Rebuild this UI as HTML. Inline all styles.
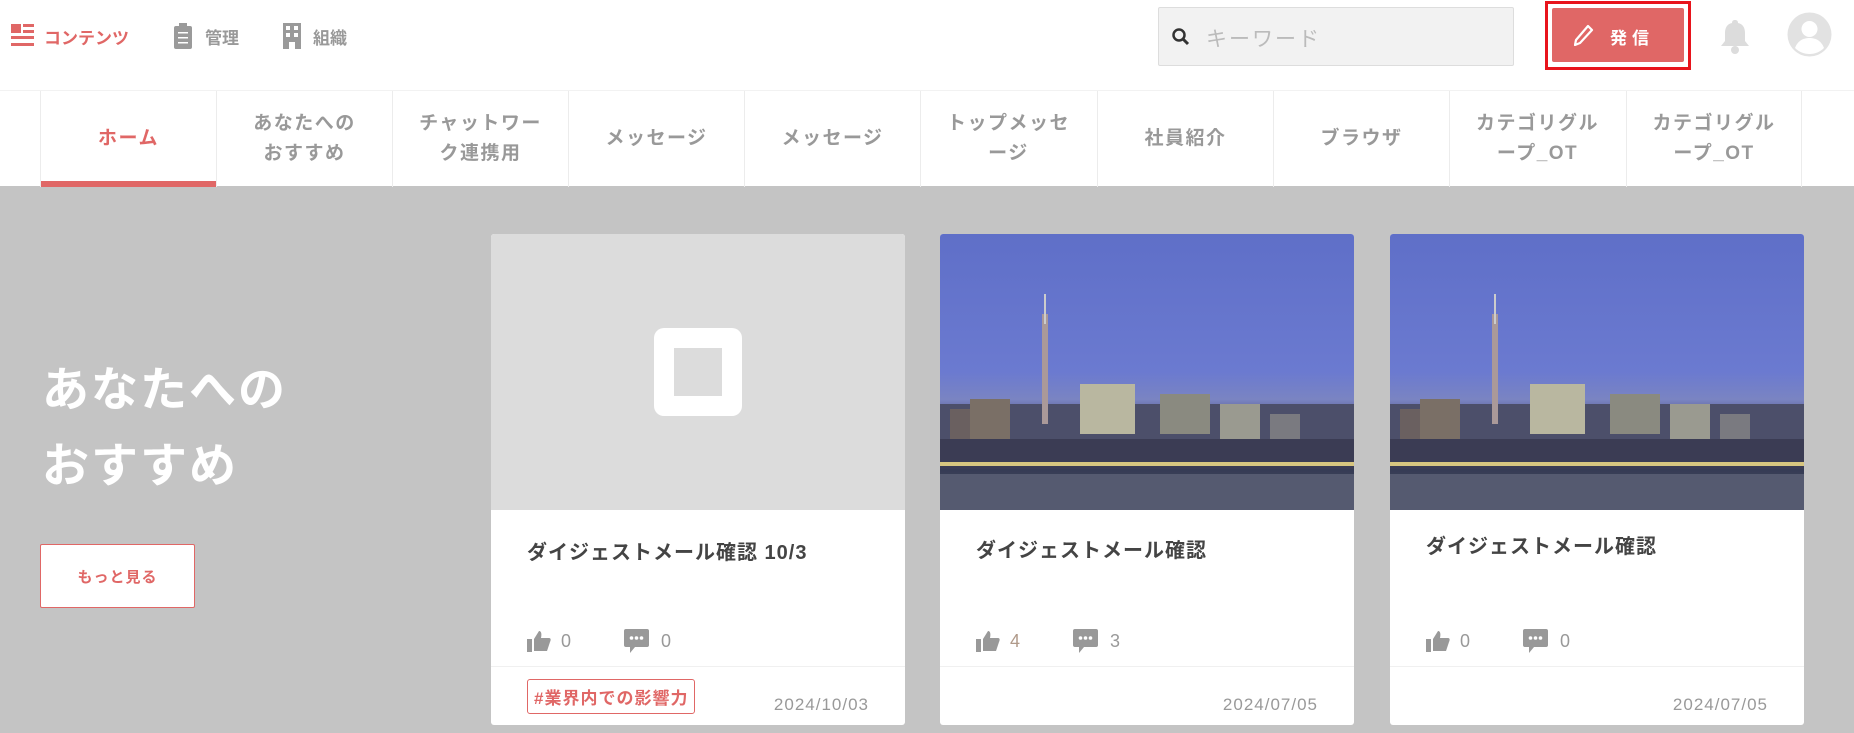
<!DOCTYPE html>
<html><head><meta charset="utf-8"><style>
*{margin:0;padding:0;box-sizing:border-box}
body{width:1854px;height:733px;overflow:hidden;background:#c4c4c4;font-family:"Liberation Sans","Noto Sans CJK JP",sans-serif;position:relative}
.hdr{position:absolute;left:0;top:0;width:1854px;height:90px;background:#fff}
.nav{position:absolute;left:0;top:90px;width:1854px;height:96px;background:#fff;border-top:1px solid #f2f2f2}
.tab{position:absolute;top:0;height:96px;width:176px;border-left:1px solid #ececec;display:flex;align-items:center;justify-content:center;text-align:center;font-size:19px;font-weight:bold;color:#999;line-height:30px;letter-spacing:1.5px}
.tab.on{color:#e06766}
.tab.on:after{content:"";position:absolute;left:0;right:0;bottom:0;height:6px;background:#e06766}
.card{position:absolute;top:234px;width:414px;height:491px;background:#fff;border-radius:3px;overflow:hidden}
.img{height:276px}
.ph{background:#dcdcdc;display:flex;align-items:center;justify-content:center}
.title{position:absolute;left:36px;top:302px;font-size:20px;font-weight:bold;color:#444;letter-spacing:1px}
.stats{position:absolute;left:36px;top:395px;font-size:18px;color:#999;display:flex;align-items:center}
.foot{position:absolute;left:0;right:0;top:432px;border-top:1px solid #f0f0f0}
.date{position:absolute;right:36px;top:461px;font-size:17px;color:#999;letter-spacing:1px}
.tag{position:absolute;left:36px;top:445px;border:1px solid #e06766;border-radius:3px;color:#e06766;font-size:17px;font-weight:bold;padding:4px 6px;letter-spacing:1px}
.city{background:linear-gradient(#5f6fc8 0%,#6b7ad0 50%,#7a84c2 60%,#4a507e 68%,#2a2d4a 78%,#3a4058 88%,#4b5067 100%);position:relative}
</style></head><body>
<div class="hdr">
 <svg style="position:absolute;left:11px;top:24px" width="23" height="23" viewBox="0 0 23 23"><rect x="0" y="0" width="10" height="9" fill="#e06766"/><rect x="12" y="0" width="11" height="3" fill="#e06766"/><rect x="12" y="6" width="11" height="3" fill="#e06766"/><rect x="0" y="12" width="23" height="3" fill="#e06766"/><rect x="0" y="19" width="23" height="3" fill="#e06766"/></svg>
 <div style="position:absolute;left:44px;top:24px;font-size:17px;font-weight:bold;color:#e06766">コンテンツ</div>
 <svg style="position:absolute;left:174px;top:23px" width="18" height="26" viewBox="0 0 18 26"><rect x="0" y="3" width="18" height="23" rx="2" fill="#9a9a9a"/><rect x="5" y="0" width="8" height="5" fill="#9a9a9a"/><rect x="4" y="9" width="10" height="1.5" fill="#fff"/><rect x="4" y="14" width="10" height="1.5" fill="#fff"/><rect x="4" y="19" width="10" height="1.5" fill="#fff"/></svg>
 <div style="position:absolute;left:205px;top:24px;font-size:17px;font-weight:bold;color:#999">管理</div>
 <svg style="position:absolute;left:283px;top:23px" width="18" height="26" viewBox="0 0 18 26"><rect x="0" y="0" width="18" height="26" fill="#9a9a9a"/><rect x="3" y="3" width="4" height="4" fill="#fff"/><rect x="11" y="3" width="4" height="4" fill="#fff"/><rect x="3" y="10" width="4" height="4" fill="#fff"/><rect x="11" y="10" width="4" height="4" fill="#fff"/><rect x="6" y="19" width="6" height="7" fill="#fff"/></svg>
 <div style="position:absolute;left:313px;top:24px;font-size:17px;font-weight:bold;color:#999">組織</div>
 <div style="position:absolute;left:1158px;top:7px;width:356px;height:59px;background:#f2f2f2;border:1px solid #ddd;border-radius:2px">
  <svg style="position:absolute;left:13px;top:20px" width="18" height="18" viewBox="0 0 18 18"><circle cx="7" cy="7" r="5.5" fill="none" stroke="#333" stroke-width="2.5"/><line x1="11" y1="11" x2="16" y2="16" stroke="#333" stroke-width="3"/></svg>
  <div style="position:absolute;left:47px;top:15px;font-size:21px;color:#bbb;letter-spacing:2px">キーワード</div>
 </div>
 <div style="position:absolute;left:1545px;top:1px;width:146px;height:69px;border:3px solid #e8141c"></div>
 <div style="position:absolute;left:1552px;top:8px;width:132px;height:54px;background:#e06766;border-radius:2px;color:#fff;font-weight:bold;font-size:17px;letter-spacing:5px">
  <svg style="position:absolute;left:22px;top:16px" width="20" height="22" viewBox="0 0 20 22"><path d="M14 2 L18 6 L6 19 L1 21 L2 16 Z" fill="none" stroke="#fff" stroke-width="2.2" stroke-linejoin="round"/></svg>
  <span style="position:absolute;left:58px;top:16px">発信</span>
 </div>
 <svg style="position:absolute;left:1719px;top:18px" width="32" height="36" viewBox="0 0 32 36"><path d="M16 2c2 0 3 1 3 3 5 1 7 5 7 10v8l4 5H2l4-5v-8c0-5 2-9 7-10 0-2 1-3 3-3z" fill="#dcdcdc"/><circle cx="16" cy="32" r="4" fill="#dcdcdc"/></svg>
 <svg style="position:absolute;left:1787px;top:12px" width="45" height="45" viewBox="0 0 45 45"><circle cx="22.5" cy="22.5" r="22" fill="#e2e2e2"/><circle cx="22.5" cy="17" r="8" fill="#fff"/><path d="M8 36c3-8 9-10 14.5-10s11.5 2 14.5 10c-4 4-9 6-14.5 6S12 40 8 36z" fill="#fff"/></svg>
</div>
<div class="nav">
 <div class="tab on" style="left:40px">ホーム</div>
 <div class="tab" style="left:216px">あなたへの<br>おすすめ</div>
 <div class="tab" style="left:392px">チャットワー<br>ク連携用</div>
 <div class="tab" style="left:568px">メッセージ</div>
 <div class="tab" style="left:744px">メッセージ</div>
 <div class="tab" style="left:920px">トップメッセ<br>ージ</div>
 <div class="tab" style="left:1097px">社員紹介</div>
 <div class="tab" style="left:1273px">ブラウザ</div>
 <div class="tab" style="left:1449px">カテゴリグル<br>ープ_OT</div>
 <div class="tab" style="left:1626px;border-right:1px solid #ececec">カテゴリグル<br>ープ_OT</div>
</div>
<div style="position:absolute;left:42px;top:352px;font-size:47px;font-weight:bold;color:#fff;line-height:76px;letter-spacing:2px">あなたへの<br>おすすめ</div>
<div style="position:absolute;left:40px;top:544px;width:155px;height:64px;background:#fff;border:1px solid #e06766;border-radius:2px;color:#e06766;font-size:15px;font-weight:bold;display:flex;align-items:center;justify-content:center;letter-spacing:1px">もっと見る</div>

<div class="card" style="left:491px">
 <div class="img ph"><div style="width:88px;height:88px;background:#fff;border-radius:10px;display:flex;align-items:center;justify-content:center"><div style="width:48px;height:48px;background:#dcdcdc"></div></div></div>
 <div class="title">ダイジェストメール確認 10/3</div>
 <div class="stats"><svg width="24" height="22" viewBox="0 0 24 22"><rect x="0" y="9" width="5" height="13" fill="#999"/><path d="M7 9 L12 1 C14 1 15 3 14 8 H22 C24 8 24 10 23 12 L20 21 H7 Z" fill="#999"/></svg><span style="margin:0 53px 0 10px">0</span><svg width="25" height="24" viewBox="0 0 25 24"><path d="M2 0H23a2 2 0 0 1 2 2V16a2 2 0 0 1-2 2H11L6 24V18H2a2 2 0 0 1-2-2V2a2 2 0 0 1 2-2z" fill="#999"/><circle cx="7.5" cy="9" r="1.8" fill="#fff"/><circle cx="12.5" cy="9" r="1.8" fill="#fff"/><circle cx="17.5" cy="9" r="1.8" fill="#fff"/></svg><span style="margin-left:12px">0</span></div>
 <div class="foot"></div>
 <div class="tag">#業界内での影響力</div>
 <div class="date">2024/10/03</div>
</div>

<div class="card" style="left:940px">
 <div class="img city"><svg width="414" height="276" viewBox="0 0 414 276" style="position:absolute;left:0;top:0"><rect x="0" y="170" width="414" height="40" fill="#4c4f6a"/><rect x="102" y="80" width="6" height="110" fill="#a99"/><rect x="104" y="60" width="2" height="30" fill="#ccc"/><rect x="140" y="150" width="55" height="50" fill="#b9b7a0"/><rect x="30" y="165" width="40" height="40" fill="#7a6f66"/><rect x="10" y="175" width="20" height="30" fill="#6a6060"/><rect x="220" y="160" width="50" height="40" fill="#8a8a80"/><rect x="280" y="170" width="40" height="35" fill="#9a9a90"/><rect x="330" y="180" width="30" height="25" fill="#7a7a80"/><rect x="0" y="205" width="414" height="30" fill="#3b3c54"/><rect x="0" y="228" width="414" height="4" fill="#d8c680"/><rect x="0" y="240" width="414" height="36" fill="#555a70"/></svg></div>
 <div class="title" style="top:300px">ダイジェストメール確認</div>
 <div class="stats"><svg width="24" height="22" viewBox="0 0 24 22"><rect x="0" y="9" width="5" height="13" fill="#999"/><path d="M7 9 L12 1 C14 1 15 3 14 8 H22 C24 8 24 10 23 12 L20 21 H7 Z" fill="#999"/></svg><span style="margin:0 53px 0 10px;color:#b09a8a">4</span><svg width="25" height="24" viewBox="0 0 25 24"><path d="M2 0H23a2 2 0 0 1 2 2V16a2 2 0 0 1-2 2H11L6 24V18H2a2 2 0 0 1-2-2V2a2 2 0 0 1 2-2z" fill="#999"/><circle cx="7.5" cy="9" r="1.8" fill="#fff"/><circle cx="12.5" cy="9" r="1.8" fill="#fff"/><circle cx="17.5" cy="9" r="1.8" fill="#fff"/></svg><span style="margin-left:12px">3</span></div>
 <div class="foot"></div>
 <div class="date">2024/07/05</div>
</div>

<div class="card" style="left:1390px">
 <div class="img city"><svg width="414" height="276" viewBox="0 0 414 276" style="position:absolute;left:0;top:0"><rect x="0" y="170" width="414" height="40" fill="#4c4f6a"/><rect x="102" y="80" width="6" height="110" fill="#a99"/><rect x="104" y="60" width="2" height="30" fill="#ccc"/><rect x="140" y="150" width="55" height="50" fill="#b9b7a0"/><rect x="30" y="165" width="40" height="40" fill="#7a6f66"/><rect x="10" y="175" width="20" height="30" fill="#6a6060"/><rect x="220" y="160" width="50" height="40" fill="#8a8a80"/><rect x="280" y="170" width="40" height="35" fill="#9a9a90"/><rect x="330" y="180" width="30" height="25" fill="#7a7a80"/><rect x="0" y="205" width="414" height="30" fill="#3b3c54"/><rect x="0" y="228" width="414" height="4" fill="#d8c680"/><rect x="0" y="240" width="414" height="36" fill="#555a70"/></svg></div>
 <div class="title" style="top:296px">ダイジェストメール確認</div>
 <div class="stats"><svg width="24" height="22" viewBox="0 0 24 22"><rect x="0" y="9" width="5" height="13" fill="#999"/><path d="M7 9 L12 1 C14 1 15 3 14 8 H22 C24 8 24 10 23 12 L20 21 H7 Z" fill="#999"/></svg><span style="margin:0 53px 0 10px">0</span><svg width="25" height="24" viewBox="0 0 25 24"><path d="M2 0H23a2 2 0 0 1 2 2V16a2 2 0 0 1-2 2H11L6 24V18H2a2 2 0 0 1-2-2V2a2 2 0 0 1 2-2z" fill="#999"/><circle cx="7.5" cy="9" r="1.8" fill="#fff"/><circle cx="12.5" cy="9" r="1.8" fill="#fff"/><circle cx="17.5" cy="9" r="1.8" fill="#fff"/></svg><span style="margin-left:12px">0</span></div>
 <div class="foot"></div>
 <div class="date">2024/07/05</div>
</div>
</body></html>
